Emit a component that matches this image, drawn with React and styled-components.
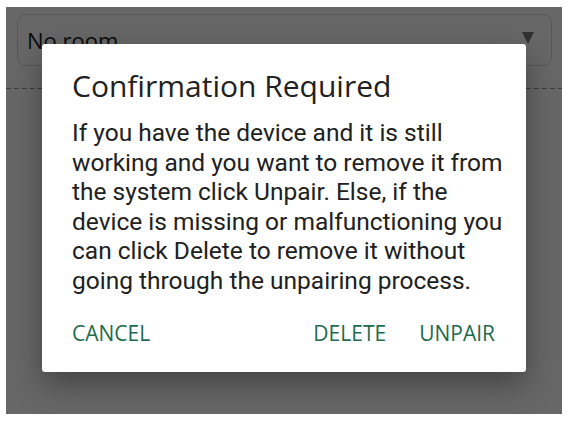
import React from "react";
import styled, { createGlobalStyle } from "styled-components";

const GlobalStyle = createGlobalStyle`
  html, body {
    margin: 0;
    padding: 0;
    background: #ffffff;
  }
`;

const Frame = styled.div`
  width: 568px;
  height: 422px;
  padding: 7px 6px 8px 6px;
  box-sizing: border-box;
`;

const Screen = styled.div`
  position: relative;
  height: 100%;
  background: #fafafa;
  overflow: hidden;
`;

const RoomSelect = styled.div`
  margin: 7px 10px 0 11px;
  height: 52px;
  border: 1px solid #d4d4d4;
  border-radius: 9px;
  display: flex;
  align-items: center;
  justify-content: space-between;
  padding: 0 17px 0 9px;
  box-sizing: border-box;
  font-family: "Open Sans", sans-serif;
  font-size: 22px;
  color: #1c1c1c;
`;

const Caret = styled.span`
  width: 0;
  height: 0;
  border-left: 6px solid transparent;
  border-right: 6px solid transparent;
  border-top: 12px solid #777777;
  margin-top: -5px;
`;

const Divider = styled.div`
  margin-top: 22px;
  height: 1px;
  background: repeating-linear-gradient(
    to right,
    #999999 0 5px,
    transparent 5px 8px
  );
`;

const Scrim = styled.div`
  position: absolute;
  inset: 0;
  background: rgba(0, 0, 0, 0.59);
  display: flex;
  align-items: flex-start;
  justify-content: center;
  padding-top: 37px;
`;

const Dialog = styled.div`
  width: 484px;
  height: 328px;
  background: #ffffff;
  border-radius: 3px;
  box-shadow: 0 12px 30px rgba(0, 0, 0, 0.35);
  padding: 22px 31px 0 30px;
  box-sizing: border-box;
`;

const Title = styled.h2`
  margin: 0;
  font-family: "Open Sans", sans-serif;
  font-weight: 400;
  font-size: 30px;
  line-height: 40px;
  color: #212121;
`;

const Message = styled.p`
  margin: 12px 0 0 0;
  font-family: Roboto, sans-serif;
  font-size: 24.5px;
  line-height: 29.6px;
  color: #212121;
  white-space: nowrap;
`;

const Actions = styled.div`
  display: flex;
  align-items: center;
  margin-top: 23px;
  height: 28px;
`;

const Spacer = styled.div`
  flex: 1;
`;

const ActionButton = styled.button`
  border: none;
  background: none;
  padding: 0;
  margin-left: ${(p) => (p.$first ? "0" : "33px")};
  font-family: "Open Sans", sans-serif;
  font-size: 21px;
  line-height: 28px;
  color: #1e6b4e;
  text-transform: uppercase;
`;

const lines = [
  "If you have the device and it is still",
  "working and you want to remove it from",
  "the system click Unpair. Else, if the",
  "device is missing or malfunctioning you",
  "can click Delete to remove it without",
  "going through the unpairing process.",
];

export default function App() {
  return (
    <>
      <GlobalStyle />
      <Frame>
        <Screen>
          <RoomSelect>
            <span>No room</span>
            <Caret />
          </RoomSelect>
          <Divider />
          <Scrim>
            <Dialog>
              <Title>Confirmation Required</Title>
              <Message>
                {lines.map((line, i) => (
                  <React.Fragment key={i}>
                    {line}
                    {i < lines.length - 1 && <br />}
                  </React.Fragment>
                ))}
              </Message>
              <Actions>
                <ActionButton $first>Cancel</ActionButton>
                <Spacer />
                <ActionButton $first>Delete</ActionButton>
                <ActionButton>Unpair</ActionButton>
              </Actions>
            </Dialog>
          </Scrim>
        </Screen>
      </Frame>
    </>
  );
}
